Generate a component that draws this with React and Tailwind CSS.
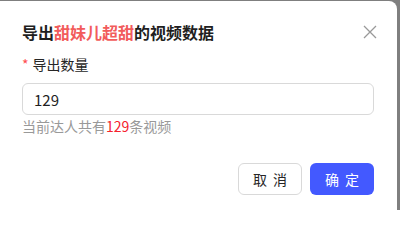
export default function App() {
  return (
    <div
      className="h-[210px] w-[400px] overflow-hidden bg-[#7f7f7f] pt-px pr-[3px]"
      style={{ fontFamily: '"PingFang SC", "Noto Sans CJK SC", "Liberation Sans", sans-serif' }}
    >
      <div className="h-[220px] rounded-tr-lg bg-white pl-[22px] pr-[23px] pt-[19px]">
        {/* header */}
        <div className="flex items-center justify-between">
          <h2 className="text-[16px] font-bold leading-6 text-[#1f1f1f]">
            导出<span className="text-[#f25c5c]">甜妹儿超甜</span>的视频数据
          </h2>
          <button className="mr-[-3px] text-[#999]" aria-label="close">
            <svg width="14" height="14" viewBox="0 0 14 14" fill="none" stroke="currentColor" strokeWidth="1.3">
              <path d="M1 1l12 12M13 1L1 13" />
            </svg>
          </button>
        </div>

        {/* form item */}
        <div className="mt-[9px] flex items-center text-[14px] leading-[22px] text-[#262626]">
          <span className="mr-[4px] text-[#ff4d4f]">*</span>
          导出数量
        </div>
        <input
          className="mt-2 h-[32px] w-full rounded-md border border-[#d9d9d9] px-[11px] text-[15px] text-[#1f1f1f] outline-none"
          defaultValue="129"
        />
        <p className="text-[14px] leading-[22px] text-[#999]">
          当前达人共有<span className="text-[#f5222d]">129</span>条视频
        </p>

        {/* footer */}
        <div className="mt-[26px] flex justify-end gap-2">
          <button className="flex h-[32px] w-[64px] items-center justify-center gap-[6px] rounded-md border border-[#d9d9d9] bg-white text-[14px] text-[#262626]">
            <span>取</span>
            <span>消</span>
          </button>
          <button className="flex h-[32px] w-[64px] items-center justify-center gap-[6px] rounded-md bg-[#4359ff] text-[14px] text-white">
            <span>确</span>
            <span>定</span>
          </button>
        </div>
      </div>
    </div>
  )
}
